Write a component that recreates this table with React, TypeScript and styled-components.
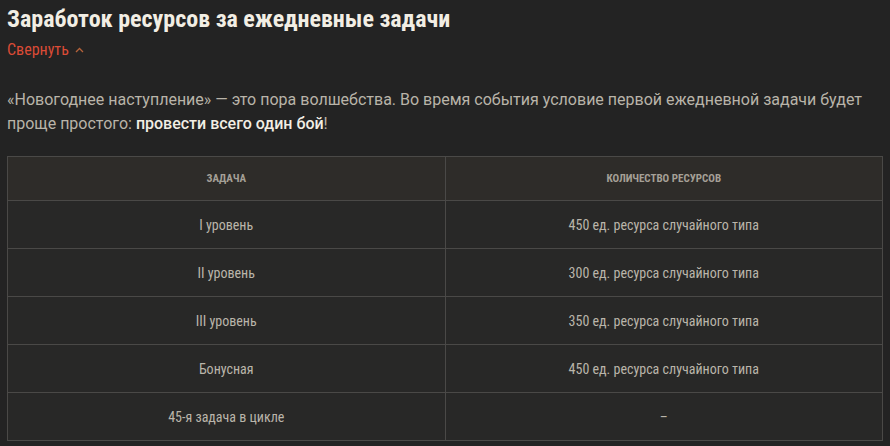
import styled, { createGlobalStyle } from 'styled-components';

const GlobalStyle = createGlobalStyle`
  html, body {
    margin: 0;
    background: #232323;
  }
`;

const narrow = `"Roboto Condensed", "Liberation Sans Narrow", "DejaVu Sans Condensed", sans-serif`;

// page wrapper
const Page = styled.div`
  padding: 4px 7px 0 7px;
  font-family: Roboto, "Noto Sans", sans-serif;
`;

const Title = styled.h2`
  margin: 0;
  font-family: ${narrow};
  font-weight: 700;
  font-size: 24px;
  line-height: 31px;
  color: #f2eee4;
`;

const Toggle = styled.button`
  display: flex;
  align-items: center;
  gap: 6px;
  margin: 5px 0 0;
  padding: 0;
  border: 0;
  background: none;
  font-family: ${narrow};
  font-size: 16px;
  line-height: 20px;
  color: #dc4b36;
  cursor: pointer;
`;

const Intro = styled.p`
  margin: 28px 0 20px;
  font-family: Roboto, sans-serif;
  font-size: 16px;
  line-height: 24px;
  color: #b9b4a9;

  strong {
    font-weight: 500;
    color: #f2eee4;
  }
`;

const Table = styled.table`
  width: 876px;
  border-collapse: collapse;
  font-family: ${narrow};
  text-align: center;
`;

const Head = styled.th`
  height: 41px;
  border: 1px solid #4a4947;
  background: #2e2c29;
  font-size: 11px;
  font-weight: 700;
  text-transform: uppercase;
  color: #a5a097;
`;

const Cell = styled.td`
  height: 45px;
  width: 50%;
  border: 1px solid #4a4947;
  background: #282827;
  font-size: 14px;
  color: #bab5aa;
`;

const Chevron = () => (
  <svg width="9" height="6" viewBox="0 0 9 6" fill="none">
    <path d="M1 5 L4.5 1.5 L8 5" stroke="#b5623a" strokeWidth="1.3" />
  </svg>
);

const rows = [
  ['I уровень', '450 ед. ресурса случайного типа'],
  ['II уровень', '300 ед. ресурса случайного типа'],
  ['III уровень', '350 ед. ресурса случайного типа'],
  ['Бонусная', '450 ед. ресурса случайного типа'],
  ['45-я задача в цикле', '–'],
];

export default function App() {
  return (
    <>
      <GlobalStyle />
      <Page>
        <Title>Заработок ресурсов за ежедневные задачи</Title>
        <Toggle>
          Свернуть <Chevron />
        </Toggle>
        <Intro>
          «Новогоднее наступление» — это пора волшебства. Во время события условие первой ежедневной задачи будет
          проще простого: <strong>провести всего один бой</strong>!
        </Intro>
        <Table>
          <thead>
            <tr>
              <Head>Задача</Head>
              <Head>Количество ресурсов</Head>
            </tr>
          </thead>
          <tbody>
            {rows.map(([task, amount]) => (
              <tr key={task}>
                <Cell>{task}</Cell>
                <Cell>{amount}</Cell>
              </tr>
            ))}
          </tbody>
        </Table>
      </Page>
    </>
  );
}
